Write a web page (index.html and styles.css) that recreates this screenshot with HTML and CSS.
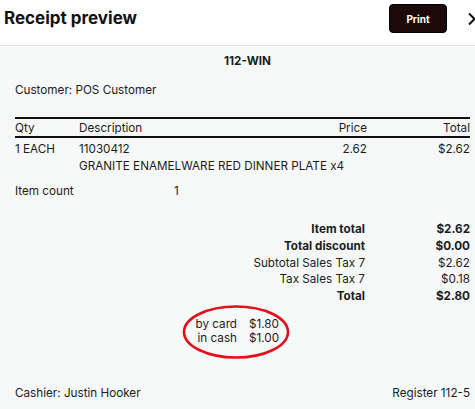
FILE: index.html
```html
<!DOCTYPE html>
<html lang="en">
<head>
<meta charset="utf-8">
<title>Receipt preview</title>
<link rel="stylesheet" href="styles.css">
</head>
<body>
<div class="modal">
  <header class="header">
    <h1 class="title">Receipt preview</h1>
    <div class="actions">
      <button class="print">Print</button>
      <svg class="chev" width="10" height="14" viewBox="0 0 10 14"><path d="M2 1.5 L7.5 7 L2 12.5" fill="none" stroke="#111" stroke-width="2"/></svg>
    </div>
  </header>
  <main class="receipt">
    <div class="store">112-WIN</div>
    <div class="customer">Customer: POS Customer</div>
    <div class="items">
      <div class="row head">
        <span class="c-qty">Qty</span><span class="c-desc">Description</span><span class="c-price">Price</span><span class="c-total">Total</span>
      </div>
      <div class="row first">
        <span class="c-qty">1 EACH</span><span class="c-desc">11030412</span><span class="c-price">2.62</span><span class="c-total">$2.62</span>
      </div>
      <div class="row">
        <span class="c-qty"></span><span class="c-desc wide">GRANITE ENAMELWARE RED DINNER PLATE x4</span>
      </div>
    </div>
    <div class="count"><span class="count-label">Item count</span><span>1</span></div>
    <div class="totals">
      <div class="trow bold"><span class="tl">Item total</span><span class="tv">$2.62</span></div>
      <div class="trow bold"><span class="tl">Total discount</span><span class="tv">$0.00</span></div>
      <div class="trow"><span class="tl">Subtotal Sales Tax 7</span><span class="tv">$2.62</span></div>
      <div class="trow"><span class="tl">Tax Sales Tax 7</span><span class="tv">$0.18</span></div>
      <div class="trow bold"><span class="tl">Total</span><span class="tv">$2.80</span></div>
    </div>
    <div class="payments">
      <div class="pay-grid">
        <span class="pl">by card</span><span class="pv">$1.80</span>
        <span class="pl">in cash</span><span class="pv">$1.00</span>
      </div>
      <svg class="circle" width="110" height="56" viewBox="0 0 110 56"><ellipse cx="55" cy="28" rx="52" ry="25.5" fill="none" stroke="#e3101c" stroke-width="2.6"/></svg>
    </div>
    <div class="footer"><span>Cashier: Justin Hooker</span><span>Register 112-5</span></div>
  </main>
</div>
</body>
</html>
```
FILE: styles.css
```css
* { box-sizing: border-box; }
html, body { margin: 0; padding: 0; }
body {
  width: 475px;
  height: 409px;
  overflow: hidden;
  font-family: Inter, "Liberation Sans", Arial, sans-serif;
  color: #1c1c1c;
  background: #f7f8f8;
}
.modal { width: 475px; }
.header {
  height: 46px;
  background: #fff;
  border-bottom: 1px solid #e2e3e8;
  display: flex;
  align-items: flex-start;
  justify-content: space-between;
  padding: 4px 0 0 4px;
}
.title {
  margin: 4px 0 0;
  font-size: 17px;
  line-height: 21px;
  font-weight: 700;
  color: #111;
}
.actions { display: flex; align-items: center; gap: 20px; margin-right: -2px; }
.print {
  width: 58px;
  height: 29px;
  background: #1c0a0a;
  color: #fff;
  border: 1px solid #000;
  border-radius: 4px;
  font-family: inherit;
  font-size: 10px;
  font-weight: 700;
  padding: 0;
}
.chev { display: block; }
.receipt {
  padding: 7px 5px 0 15px;
  font-size: 11.7px;
  line-height: 16px;
}
.store { text-align: center; font-weight: 700; margin-left: 10px; }
.customer { margin-top: 13px; }
.items {
  margin-top: 19px;
  border-top: 2px solid #111;
}
.row { display: flex; height: 17px; align-items: center; }
.row.head { border-bottom: 2px solid #111; height: 19px; padding-top: 1px; }
.row.first { margin-top: 2px; }
.c-qty { width: 64px; flex: none; }
.c-desc { flex: 1; }
.c-desc.wide { white-space: nowrap; }
.c-price { width: 60px; text-align: right; flex: none; margin-right: 43px; }
.c-total { width: 60px; text-align: right; flex: none; }
.count { margin-top: 9px; display: flex; }
.count-label { width: 159px; }
.totals { margin-top: 22px; }
.trow { display: flex; justify-content: flex-end; height: 16.7px; align-items: center; }
.tl { text-align: right; }
.tv { width: 105px; text-align: right; }
.trow.bold { font-weight: 700; }
.payments {
  position: relative;
  height: 56px;
  padding-left: 162px;
}
.pay-grid {
  display: grid;
  grid-template-columns: 60px auto;
  column-gap: 12px;
  line-height: 14px;
  padding-top: 13px;
}
.pl { text-align: right; }
.circle { position: absolute; left: 166px; top: 0; }
.footer {
  margin-top: 25px;
  display: flex;
  justify-content: space-between;
}
```
